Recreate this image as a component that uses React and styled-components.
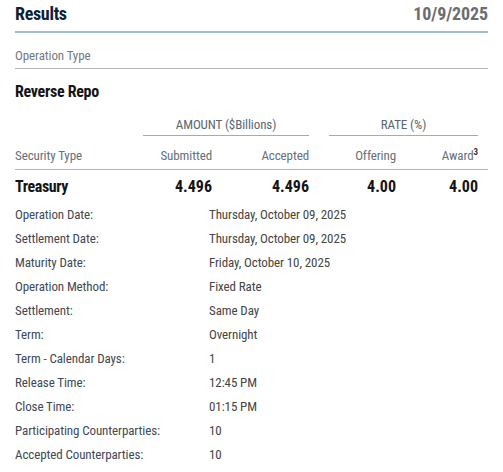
import React from 'react';
import styled, {createGlobalStyle} from "styled-components";

const Global = createGlobalStyle`
  body {
    margin: 0;
    background: #fff;
    font-family: "Roboto Condensed", Roboto, "Liberation Sans", sans-serif;
  }
`

const Page = styled.div`
  width: 473px;
  padding: 0 15px;
  letter-spacing: -0.1px;
`

const Head = styled.div`
  display: flex;
  justify-content: space-between;
  align-items: flex-end;
  height: 31px;
  border-bottom: 2px solid #9dbdd5;
`

const Title = styled.h1`
  margin: 0 0 7px;
  font-size: 18px;
  font-weight: 700;
  letter-spacing: -0.3px;
  color: #0d2236;
`

const Stamp = styled.span`
  margin-bottom: 7px;
  font-size: 18px;
  font-weight: 700;
  color: #6d6d6f;
`

const Caption = styled.div`
  height: 36px;
  display: flex;
  align-items: center;
  padding-top: 9px;
  box-sizing: border-box;
  border-bottom: 1px solid #b4b4b4;
  font-size: 13px;
  color: #6f7a85;
`

const Kind = styled.h2`
  margin: 0;
  padding-top: 13px;
  height: 38px;
  box-sizing: border-box;
  font-size: 16px;
  font-weight: 700;
  letter-spacing: -0.3px;
  color: #141414;
`

const Grid = styled.div`
  display: grid;
  grid-template-columns: 128px 69px 97px 20px 67px 82px 1fr;
  margin-top: 10px;
`

const Group = styled.div`
  grid-column: span 2;
  text-align: center;
  font-size: 13px;
  color: #5b6671;
  padding-bottom: 3px;
  border-bottom: 1px solid #a9a9a9;
`

const Gap = styled.div``

const Col = styled.div`
  font-size: 13px;
  color: #66717c;
  text-align: ${p => p.$left ? 'left' : 'right'};
  padding: 12px 0 6px;
  border-bottom: 1px solid #b4b4b4;
  sup {
    font-size: 9px;
    font-weight: 700;
    color: #333;
    vertical-align: 5px;
    line-height: 0;
  }
`

const Cell = styled.div`
  font-size: 16px;
  font-weight: 700;
  color: #141414;
  text-align: ${p => p.$left ? 'left' : 'right'};
  padding: 7px 0 6px;
  letter-spacing: ${p => p.$left ? '-0.4px' : '0'};
`

const Details = styled.div`
  display: grid;
  grid-template-columns: 194px 1fr;
  grid-auto-rows: 24px;
  align-items: center;
  font-size: 13px;
`

const Label = styled.div`
  color: #3f4a56;
`

const Value = styled.div`
  color: #454545;
`

const rows = [
    ['Operation Date:', 'Thursday, October 09, 2025'],
    ['Settlement Date:', 'Thursday, October 09, 2025'],
    ['Maturity Date:', 'Friday, October 10, 2025'],
    ['Operation Method:', 'Fixed Rate'],
    ['Settlement:', 'Same Day'],
    ['Term:', 'Overnight'],
    ['Term - Calendar Days:', '1'],
    ['Release Time:', '12:45 PM'],
    ['Close Time:', '01:15 PM'],
    ['Participating Counterparties:', '10'],
    ['Accepted Counterparties:', '10'],
]

const App = () => {
    return (
        <Page>
            <Global/>
            <Head>
                <Title>Results</Title>
                <Stamp>10/9/2025</Stamp>
            </Head>
            <Caption>Operation Type</Caption>
            <Kind>Reverse Repo</Kind>

            <Grid>
                <Gap/>
                <Group>AMOUNT ($Billions)</Group>
                <Gap/>
                <Group>RATE (%)</Group>
                <Gap/>

                <Col $left>Security Type</Col>
                <Col>Submitted</Col>
                <Col>Accepted</Col>
                <Col/>
                <Col>Offering</Col>
                <Col>Award<sup>3</sup></Col>
                <Col/>

                <Cell $left>Treasury</Cell>
                <Cell>4.496</Cell>
                <Cell>4.496</Cell>
                <Gap/>
                <Cell>4.00</Cell>
                <Cell>4.00</Cell>
                <Gap/>
            </Grid>

            <Details>
                {rows.map(([k, v]) => (
                    <React.Fragment key={k}>
                        <Label>{k}</Label>
                        <Value>{v}</Value>
                    </React.Fragment>
                ))}
            </Details>
        </Page>
    )
};

export default App;
